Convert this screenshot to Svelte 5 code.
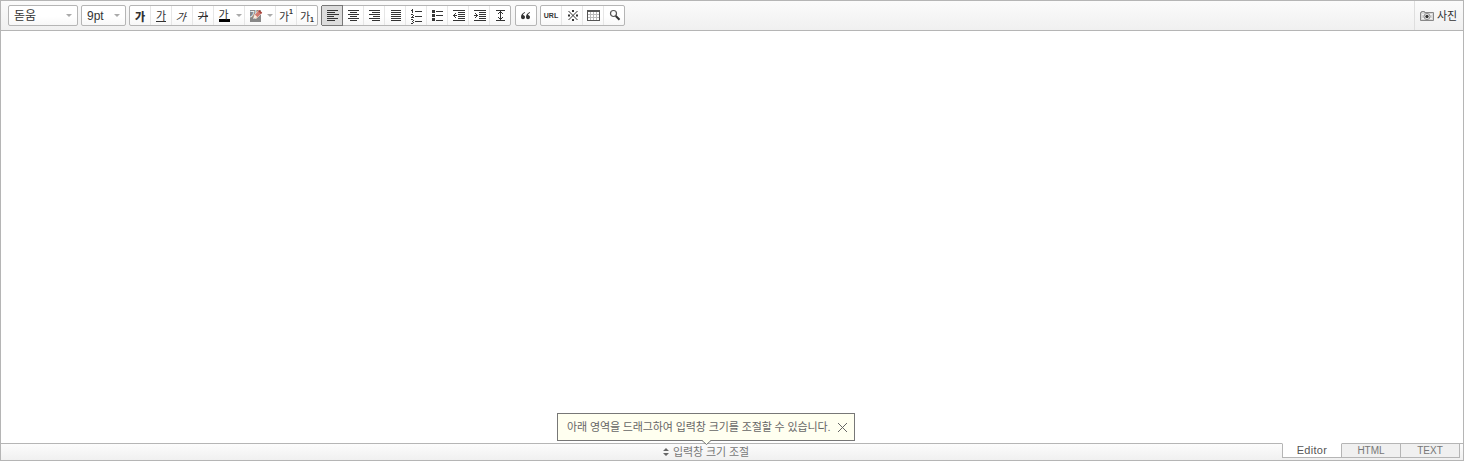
<script>
  const lines = (x, rows) => rows.map(([dx, w], i) => `M${x + dx} ${4.5 + i * 2}h${w}`).join('');
  const align = [
    { name: 'left', d: lines(5, [[0, 11], [0, 8], [0, 12], [0, 7], [0, 11], [0, 8]]) },
    { name: 'center', d: lines(5, [[0, 11], [2, 7], [0, 11], [2, 7], [0, 11], [2, 7]]) },
    { name: 'right', d: lines(5, [[0, 11], [3, 8], [0, 11], [4, 7], [0, 11], [3, 8]]) },
    { name: 'justify', d: lines(6, [[0, 10], [0, 10], [0, 10], [0, 10], [0, 10], [0, 10]]) },
    { name: 'ordered', d: 'M6 3.5h1M5 4.5h2M6 5.5h1M6 6.5h1M5 8.5h2M7 9.5h1M6 10.5h1M5 11.5h3M5 13.5h2M7 14.5h1M6 15.5h1M7 16.5h1M5 17.5h2M9 5.5h7M9 10.5h7M9 15.5h7' },
    { name: 'bullets', d: 'M5 4.5h3M5 5.5h3M5 6.5h3M5 9.5h3M5 10.5h3M5 8.5h3M5 13.5h3M5 14.5h3M5 12.5h3M9 5.5h7M9 9.5h7M9 14.5h7' },
    { name: 'outdent', d: 'M5 4.5h12M10 6.5h7M10 8.5h7M10 10.5h7M10 12.5h7M5 14.5h12M5 9.5h4M6 8.5h1M6 10.5h1M7 7.5h1M7 11.5h1' },
    { name: 'indent', d: 'M5 4.5h12M10 6.5h7M10 8.5h7M10 10.5h7M10 12.5h7M5 14.5h12M5 9.5h4M7 8.5h1M7 10.5h1M6 7.5h1M6 11.5h1' },
    { name: 'line height', d: 'M6 4.5h9M6 14.5h9M10 5.5h1M9 6.5h3M8 7.5h1M10 7.5h1M12 7.5h1M10 8.5h1M10 9.5h1M10 10.5h1M8 11.5h1M10 11.5h1M12 11.5h1M9 12.5h3M10 13.5h1' }
  ];
</script>

<div class="editor">
  <header>
    <div class="group font"><span>돋움</span><i class="arrow"></i></div>
    <div class="group size"><span>9pt</span><i class="arrow"></i></div>
    <div class="group">
      <button class="ga bold">가</button>
      <button class="ga"><span class="under">가</span></button>
      <button class="ga"><span class="italic">가</span></button>
      <button class="ga"><span class="strike">가</span></button>
      <button class="ga"><span class="color">가</span></button>
      <button class="drop"><i class="arrow"></i></button>
      <button class="ga"><span class="back">가</span>
        <svg class="pencil" viewBox="0 0 21 19"><path d="M8.5 12.5l1.2-4 4.6-4.6 2.9 2.9-4.6 4.6z" fill="#d27b70" stroke="#fff" stroke-width=".5" /><path d="M14.3 3.9l2.9 2.9-1.2 1.2-2.9-2.9z" fill="#a6433b" /><path d="M8.5 12.5l1.2-4 2.8 2.8z" fill="#fff0dc" /></svg>
      </button>
      <button class="drop"><i class="arrow"></i></button>
      <button class="ga script"><span>가</span><sup>1</sup></button>
      <button class="ga script"><span>가</span><sub>1</sub></button>
    </div>
    <div class="group">
      {#each align as icon, i}
        <button class="pic" class:active={i === 0} aria-label={icon.name}>
          <svg viewBox="0 0 21 19" shape-rendering="crispEdges"><path d={icon.d} stroke="#333" /></svg>
        </button>
      {/each}
    </div>
    <div class="group quote">
      <button class="pic" aria-label="quote"><svg viewBox="0 0 21 19"><path d="M9 6C6 7 5 9 5 11c0 3 4 3 4 0 0-1-1-2-2-2 0-1 1-2 2-2zM14 6c-3 1-4 3-4 5 0 3 4 3 4 0 0-1-1-2-2-2 0-1 1-2 2-2z" fill="#333" /></svg></button>
    </div>
    <div class="group">
      <button class="url">URL</button>
      <button class="pic" aria-label="symbol"><svg viewBox="0 0 21 19"><path d="M6.5 5l9 9M15.5 5l-9 9" stroke="#333" /><path d="M10 4h2v2h-2zM10 13h2v2h-2zM6 8.5h2v2H6zM14 8.5h2v2h-2z" fill="#333" /></svg></button>
      <button class="pic" aria-label="table"><svg viewBox="0 0 21 19" shape-rendering="crispEdges"><path d="M4 4h13v11H4z" fill="#555" /><path d="M5 6h11v8H5z" fill="#bbb" /><path d="M5 6h2v2H5zM8 6h2v2H8zM11 6h2v2h-2zM14 6h2v2h-2zM5 9h2v2H5zM8 9h2v2H8zM11 9h2v2h-2zM14 9h2v2h-2zM5 12h2v2H5zM8 12h2v2H8zM11 12h2v2h-2zM14 12h2v2h-2z" fill="#fff" /></svg></button>
      <button class="pic" aria-label="search"><svg viewBox="0 0 21 19"><circle cx="9.5" cy="7.5" r="3" fill="#fff" stroke="#555" stroke-width="1.2" /><path d="M11.8 10l3.7 3.8" stroke="#333" stroke-width="2" /></svg></button>
    </div>
    <div class="photo">
      <svg viewBox="0 0 14 12"><path d="M.5 2.5h1v-1h3v1h9v8H.5z" fill="#d8d8d8" stroke="#888" /><path d="M2 4.5h10M2 8.5h10" stroke="#f5f5f5" /><circle cx="7" cy="6.5" r="3" fill="#fff" stroke="#888" /><circle cx="7" cy="6.5" r="1.7" fill="#333" /></svg>
      <span>사진</span>
    </div>
  </header>
  <main></main>
  <footer>
    <div class="resize"><svg viewBox="0 0 6 8"><path d="M0 3l3-3 3 3zM0 5h6L3 8z" fill="#666" /></svg><span>입력창 크기 조절</span></div>
    <nav><span class="tab on">Editor</span><span class="tab">HTML</span><span class="tab">TEXT</span></nav>
    <div class="tip">
      <span>아래 영역을 드래그하여 입력창 크기를 조절할 수 있습니다.</span>
      <svg class="close" viewBox="0 0 9 9"><path d="M0 0l9 9M9 0L0 9" stroke="#666" /></svg>
      <svg class="point" viewBox="0 0 9 5"><path d="M0 0h9L4.5 4.5z" fill="#fffff0" /><path d="M0 .5L4.5 4.5 9 .5" fill="none" stroke="#777" /></svg>
    </div>
  </footer>
</div>

<style>
  .editor { width: 1464px; height: 461px; box-sizing: border-box; border: 1px solid #b5b5b5; display: flex; flex-direction: column; background: #fff; font: 11px/16px "Liberation Sans", "Noto Sans CJK KR", sans-serif; color: #333; }
  header { height: 30px; flex: none; display: flex; align-items: flex-start; padding: 4px 0 0 7px; box-sizing: border-box; background: linear-gradient(#fbfbfb, #f0f0f0); border-bottom: 1px solid #b5b5b5; }
  .group { height: 21px; box-sizing: border-box; border: 1px solid #b5b5b5; border-radius: 2px; display: flex; margin-right: 3px; background: linear-gradient(#fff 55%, #f7f7f7); }
  .font, .size { align-items: center; justify-content: space-between; padding: 0 5px; font-size: 12px; }
  .font { width: 70px; }
  .size { width: 45px; }
  .arrow { width: 0; height: 0; border: 3px solid transparent; border-top-color: #aaa; border-bottom: 0; }
  button { all: unset; width: 20px; height: 19px; display: flex; align-items: center; justify-content: center; border-right: 1px solid #e6e6e6; position: relative; }
  button:last-child { border-right: 0; }
  button svg { width: 21px; height: 19px; flex: none; }
  .pic { justify-content: flex-start; }
  .ga { font: 11px/12px "Noto Sans CJK KR", sans-serif; }
  .ga:nth-child(5), .ga:nth-child(7) { border-right: 0; }
  .bold { font-weight: 900; }
  .under { border-bottom: 1px solid #333; line-height: 11px; }
  .italic { transform: skewX(-18deg); }
  .strike { text-decoration: line-through; }
  .color { border-bottom: 3px solid #000; line-height: 10px; width: 11px; }
  .back { border-bottom: 3px solid #888; background: #888; color: #fff; line-height: 9px; font-size: 9px; width: 11px; }
  .pencil { position: absolute; left: 0; top: 0; }
  .drop { width: 10px; }
  .script sup, .script sub { font: bold 7px/8px "Liberation Sans", sans-serif; }
  .script sup { align-self: flex-start; margin-top: 2px; }
  .script sub { align-self: flex-end; margin-bottom: 1px; }
  .active { background: #dcdcdc; border-color: #777; box-shadow: -1px 0 #777, 0 -1px #777, 0 1px #777; }
  .quote { margin-left: 1px; }
  .url { font: bold 7px/8px "Liberation Sans", sans-serif; }
  .photo { margin: -4px 0 0 auto; width: 49px; height: 29px; box-sizing: border-box; border-left: 1px solid #dedede; display: flex; align-items: center; gap: 3px; padding-left: 5px; }
  .photo svg { width: 14px; height: 12px; }
  .photo span { font-family: "Noto Sans CJK KR", sans-serif; white-space: nowrap; line-height: 16px; padding-bottom: 2px; }
  main { flex: 1; }
  footer { height: 17px; box-sizing: border-box; border-top: 1px solid #b5b5b5; background: linear-gradient(#fcfcfc, #f0f0f0); position: relative; display: flex; justify-content: space-between; }
  .resize { display: flex; align-items: center; gap: 4px; padding-left: 662px; color: #777; letter-spacing: -.1px; }
  .resize svg { width: 6px; height: 8px; }
  nav { display: flex; margin: -1px 3px 0 0; }
  .tab { width: 59px; height: 15px; box-sizing: border-box; border: 1px solid #b5b5b5; border-left: 0; background: #f0f0f0; color: #777; text-align: center; line-height: 13px; font-size: 10px; }
  .tab.on { width: 60px; border-left: 1px solid #b5b5b5; border-top-color: #fff; background: #fff; color: #555; font-size: 11px; line-height: 12px; letter-spacing: .3px; }
  .tip { position: absolute; left: 556px; top: -31px; width: 298px; height: 28px; box-sizing: border-box; border: 1px solid #777; background: #fffff0; color: #666; display: flex; align-items: center; justify-content: space-between; padding: 0 7px 0 9px; white-space: nowrap; letter-spacing: -.12px; }
  .close { width: 9px; height: 9px; }
  .point { position: absolute; left: 144px; bottom: -5px; width: 9px; height: 5px; }
</style>
